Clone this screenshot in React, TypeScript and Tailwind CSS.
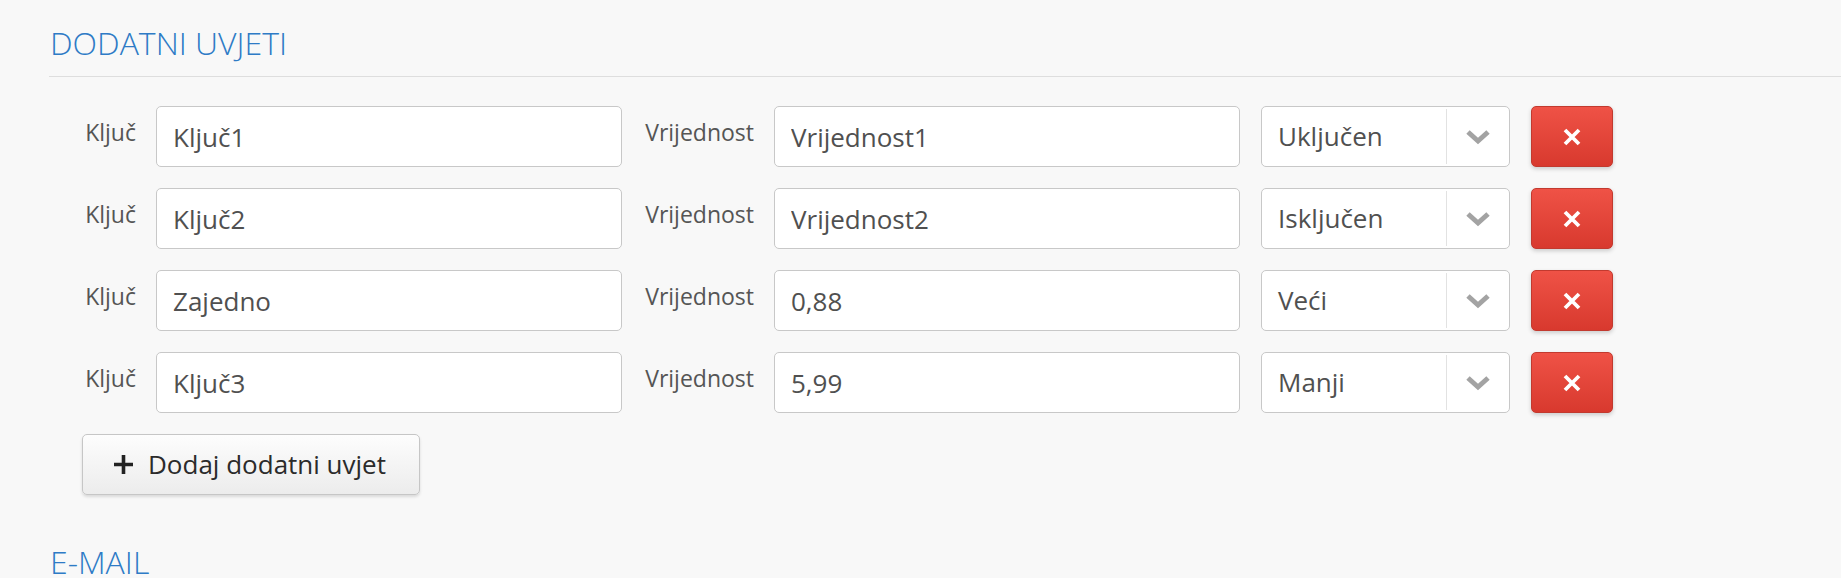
import React from "react";

interface Condition {
  key: string;
  value: string;
  op: string;
}

const conditions: Condition[] = [
  { key: "Ključ1", value: "Vrijednost1", op: "Uključen" },
  { key: "Ključ2", value: "Vrijednost2", op: "Isključen" },
  { key: "Zajedno", value: "0,88", op: "Veći" },
  { key: "Ključ3", value: "5,99", op: "Manji" },
];

const font = { fontFamily: '"Open Sans", "Liberation Sans", sans-serif' };

const ConditionRow: React.FunctionComponent<{ item: Condition }> = ({ item }) => {
  return (
    <div className="flex items-start h-[61px]">
      {/* key label */}
      <label className="w-[87px] shrink-0 text-right text-[23px] leading-[32px] pt-[10px] text-[#555]">
        Ključ
      </label>
      <input
        className="ml-5 w-[466px] h-[61px] shrink-0 px-4 bg-white border border-[#c8c8c8] rounded-[5px] text-[26px] text-[#505050] outline-none"
        style={font}
        defaultValue={item.key}
      />
      {/* value label */}
      <label className="w-[132px] shrink-0 text-right text-[23px] leading-[32px] pt-[10px] text-[#555]">
        Vrijednost
      </label>
      <input
        className="ml-5 w-[466px] h-[61px] shrink-0 px-4 bg-white border border-[#c8c8c8] rounded-[5px] text-[26px] text-[#505050] outline-none"
        style={font}
        defaultValue={item.value}
      />
      {/* operator select */}
      <div className="ml-[21px] w-[249px] h-[61px] shrink-0 flex bg-white border border-[#c8c8c8] rounded-[5px]">
        <div className="flex-1 flex items-center pl-4 text-[26px] text-[#505050]">{item.op}</div>
        <div className="w-[63px] my-[2px] border-l border-[#e2e2e2] flex items-center justify-center">
          <svg width="26" height="16" viewBox="0 0 26 16">
            <path d="M3 3 L13 12 L23 3" fill="none" stroke="#a3a3a3" strokeWidth="5" />
          </svg>
        </div>
      </div>
      {/* remove button */}
      <button
        type="button"
        className="ml-[21px] w-[82px] h-[61px] shrink-0 flex items-center justify-center rounded-[5px] border border-[#c23a2f] bg-gradient-to-b from-[#ef5246] to-[#d8392e] shadow-[0_2px_4px_rgba(0,0,0,0.18)]"
      >
        <svg width="18" height="18" viewBox="0 0 18 18">
          <path d="M2 2 L16 16 M16 2 L2 16" stroke="#fff" strokeWidth="3.8" />
        </svg>
      </button>
    </div>
  );
};

const App: React.FunctionComponent = () => {
  return (
    <div className="w-[1841px] h-[578px] overflow-hidden bg-[#f8f8f8]" style={font}>
      <div className="pl-[49px] pt-[27px]">
        {/* section heading */}
        <div className="border-b border-[#dedede] pb-[17px]">
          <h2 className="text-[32px] leading-[32px] font-light text-[#2e7bc6] pl-[1px]">
            DODATNI UVJETI
          </h2>
        </div>

        {/* condition rows */}
        <div className="flex flex-col gap-[21px] mt-[29px]">
          {conditions.map((c) => (
            <ConditionRow key={c.key} item={c} />
          ))}
        </div>

        {/* add button */}
        <button
          type="button"
          className="mt-[21px] ml-[33px] w-[338px] h-[61px] flex items-center gap-[14px] pl-[30px] rounded-[5px] border border-[#c6c6c6] bg-gradient-to-b from-[#fdfdfd] to-[#ececec] shadow-[0_2px_3px_rgba(0,0,0,0.12)] text-[26px] text-[#2b2b2b]"
        >
          <svg width="21" height="21" viewBox="0 0 21 21">
            <path d="M10.5 1 V20 M1 10.5 H20" stroke="#222" strokeWidth="3.6" />
          </svg>
          <span>Dodaj dodatni uvjet</span>
        </button>

        {/* next section */}
        <h2 className="mt-[51px] text-[32px] leading-[32px] font-light text-[#2e7bc6] pl-[1px]">
          E-MAIL
        </h2>
      </div>
    </div>
  );
};

export default App;
